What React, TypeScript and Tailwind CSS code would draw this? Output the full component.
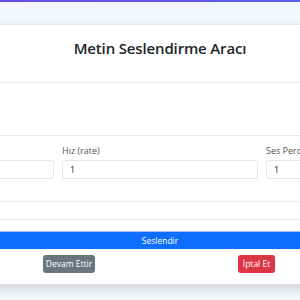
export default function App() {
  return (
    <div className="w-[300px] h-[300px] overflow-hidden bg-[#f3f6fb] font-['Open_Sans',sans-serif] text-[#212529]">
      {/* Top accent */}
      <div className="h-[2px] bg-gradient-to-r from-[#6a4be6] to-[#5a60f2]" />
      <div className="h-[22px]" />

      {/* Card */}
      <div className="w-[640px] -ml-[160px] px-[18px] bg-white border-t border-[#e2e5ea] shadow-[0_5px_10px_rgba(0,0,0,0.14)] pb-[11px]">
        <h1 className="h-[57px] pt-[12px] text-center text-[15px] font-semibold leading-[22px] tracking-[-0.15px]">Metin Seslendirme Aracı</h1>

        <div className="h-[54px] border-y border-[#e6e9ed]" />

        <div className="grid grid-cols-3 gap-[8px] mt-[8px]">
          <div>
            <div className="text-[9px] leading-[14px] text-[#555] mb-[2px]">Ses Seviyesi</div>
            <div className="h-[19px] border border-[#e3e6ea] rounded-[3px] pl-[7px] text-[9px] leading-[17px]">1</div>
          </div>
          <div>
            <div className="text-[9px] leading-[14px] text-[#555] mb-[2px]">Hız (rate)</div>
            <div className="h-[19px] border border-[#e3e6ea] rounded-[3px] pl-[7px] text-[9px] leading-[17px]">1</div>
          </div>
          <div>
            <div className="text-[9px] leading-[14px] text-[#555] mb-[2px]">Ses Perdesi (pitch)</div>
            <div className="h-[19px] border border-[#e3e6ea] rounded-[3px] pl-[7px] text-[9px] leading-[17px]">1</div>
          </div>
        </div>

        <div className="mt-[22px] h-[19px] border-y border-[#e6e9ed]" />

        <button className="mt-[11px] w-full h-[18px] bg-[#0d6efd] text-white text-[8.5px] leading-[17px] border-t border-[#9ec5fe]">Seslendir</button>

        <div className="flex mt-[5px]">
          <button className="ml-[185px] w-[52px] h-[18px] rounded-[3px] bg-[#6c757d] text-white text-[8.5px] leading-[18px]">Devam Ettir</button>
          <button className="ml-[143px] w-[37px] h-[18px] rounded-[3px] bg-[#dc3545] text-white text-[8.5px] leading-[18px]">İptal Et</button>
        </div>
      </div>
    </div>
  );
}
